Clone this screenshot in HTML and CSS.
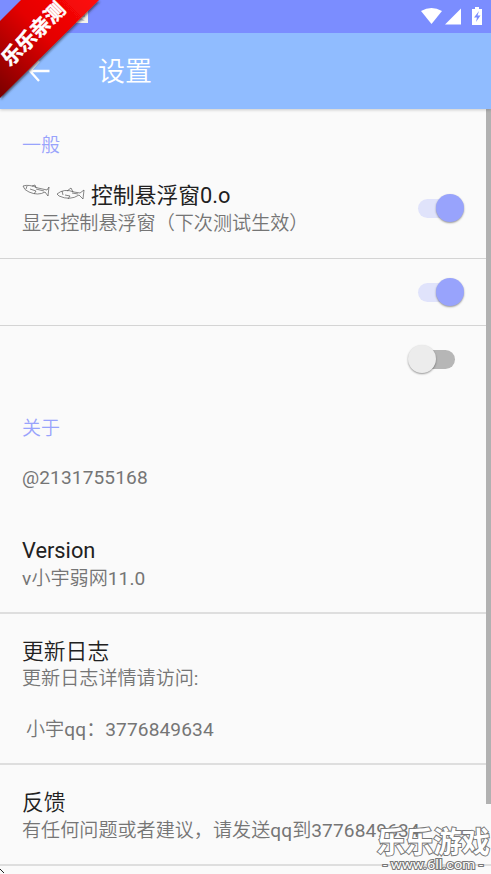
FILE: index.html
```
<!DOCTYPE html>
<html lang="zh-CN">
<head>
<meta charset="utf-8">
<title>设置</title>
<link rel="stylesheet" href="styles.css">
</head>
<body>
<div class="screen">
  <header>
    <div class="statusbar">
      <svg class="notice" width="12" height="14" viewBox="0 0 12 14"><path d="M0 0H12V14H0Z" fill="#f5f3ee"/><path d="M2 3H9V8H2ZM2 11L5 9L9 12" fill="#b9b9ca"/></svg>
      <svg class="system" width="64" height="20" viewBox="0 0 64 20" fill="#fff">
        <path d="M0 4Q10.500 -2 21 4L10.500 17Z"/>
        <path d="M40 1.500V17.500H24Z"/>
        <path d="M51 2H54V0H58V2H61V18H51Z"/>
        <path d="M58 4L53 10.500H56L55 15L59.500 8.500H56.500Z" fill="#7b8dff"/>
      </svg>
    </div>
    <div class="toolbar">
      <svg class="back" width="22" height="22" viewBox="0 0 22 22" fill="none" stroke="#fff" stroke-width="2.3"><path d="M21.500 11H3M11 1L2 11L11 21"/></svg>
      <h1>设置</h1>
    </div>
  </header>
  <main>
    <h2 class="category first">一般</h2>
    <section class="row control">
      <div class="copy">
        <div class="title"><svg class="fish" width="69" height="24" viewBox="0 0 69 24" fill="none" stroke="#555" stroke-width=".7"><path d="M1 5Q7 3 16 7L25 9L27 6L26 15L23 11Q16 15 7 11Q2 9 1 5ZM5 5L4 8M10 5L13 4L14 7M8 8L14 10L12 13M14 8L22 10"/><path d="M35 13Q42 7 52 11L58 12L62 9L61 18L57 14Q48 20 37 15ZM40 10L41 14M45 10L49 7L51 11M43 14L48 15L46 18M50 12L56 13"/></svg>控制悬浮窗0.o</div>
        <div class="summary">显示控制悬浮窗（下次测试生效）</div>
      </div>
      <div class="switch on"><i></i></div>
    </section>
    <section class="row blank"><div class="switch on"><i></i></div></section>
    <section class="row blank last"><div class="switch"><i></i></div></section>
    <h2 class="category about">关于</h2>
    <div class="row id"><div class="summary"><b>@2131755168</b></div></div>
    <section class="row version"><div class="title">Version</div><div class="summary"><b>v</b>小宇弱网<b>11.0</b></div></section>
    <section class="row log"><div class="title han">更新日志</div><div class="summary">更新日志详情请访问<b>:</b><p>小宇<b>qq</b>：<b>3776849634</b></p></div></section>
    <section class="row feedback"><div class="title han">反馈</div><div class="summary">有任何问题或者建议，请发送<b>qq</b>到<b>3776849634</b></div></section>
  </main>
  <div class="scrollbar"></div>
  <svg class="ribbon" width="104" height="104" viewBox="0 0 104 104">
    <defs>
      <linearGradient id="red" x1="0" y1="1" x2="1" y2="0"><stop stop-color="#790000"/><stop offset=".55" stop-color="#e40000"/><stop offset="1" stop-color="#ff0b0b"/></linearGradient>
      <filter id="shade"><feDropShadow dx="1" dy="1.500" stdDeviation="1" flood-color="#222" flood-opacity=".65"/></filter>
    </defs>
    <path d="M0 21L21 0H99L0 98Z" fill="url(#red)" filter="url(#shade)"/>
    <text x="32.500" y="41" text-anchor="middle" transform="rotate(-45 33 33)">乐乐亲测</text>
  </svg>
  <svg class="watermark" width="121" height="59" viewBox="0 0 121 59">
    <text class="brand" x="7" y="38" textLength="113" lengthAdjust="spacingAndGlyphs">乐乐游戏</text>
    <text class="url" x="13" y="54" textLength="100" lengthAdjust="spacingAndGlyphs">- www.6ll.com -</text>
  </svg>
  <svg class="corner" width="5" height="5" viewBox="0 0 5 5"><path d="M0 0L4 4" stroke="#222"/></svg>
</div>
</body>
</html>
```
FILE: styles.css
```
* { box-sizing: border-box; }
body { margin: 0; font-family: Roboto, "Noto Sans CJK SC", sans-serif; background: #fafafa; }
.screen { position: relative; width: 491px; height: 874px; overflow: hidden; }
header { position: relative; z-index: 2; box-shadow: 0 1px 3px #0003; }
.statusbar { height: 33px; background: #7b8dff; display: flex; justify-content: space-between; padding: 7px 6px 0 76px; }
.notice { margin-top: 2px; }
.toolbar { height: 76px; background: #90bcff; display: flex; align-items: center; padding-left: 28px; }
.back { flex: none; }
h1 { margin: 2px 0 0 48px; font-size: 27px; line-height: 36px; font-weight: 350; color: #fff; }
.category { margin: 0; padding-left: 22px; font-size: 19px; line-height: 28px; font-weight: 350; color: #98a3fc; }
.first { padding-top: 23px; height: 61px; }
.about { height: 49px; padding-top: 22px; }
.row { padding-left: 22px; border-bottom: 2px solid #dedede; }
.title { font-size: 21.8px; line-height: 28px; color: #212121; white-space: nowrap; }
.han { font-weight: 350; }
.summary { font-size: 19.1px; line-height: 26px; color: #757575; font-weight: 350; white-space: nowrap; }
.summary b { font-weight: 400; letter-spacing: .12px; }
.summary p { margin: 25px 0 0 4px; }
.control { height: 89px; padding-top: 11px; display: flex; justify-content: space-between; padding-right: 26px; border-bottom: 1px solid #d4d4d4; }
.control .summary { padding-top: 1px; }
.fish { vertical-align: -2px; }
.control .switch { margin-top: 11px; }
.blank { height: 67px; padding: 17px 26px 0 0; display: flex; justify-content: flex-end; border-bottom: 1px solid #d4d4d4; }
.last { height: 67px; border: 0; }
.switch { position: relative; width: 61px; height: 32px; flex: none; }
.switch::before { content: ""; position: absolute; left: 14px; top: 7px; width: 37px; height: 19px; border-radius: 10px; background: #b6b6b6; }
.switch i { position: absolute; left: 4px; top: 2px; width: 28px; height: 28px; border-radius: 50%; background: #ececec; box-shadow: 0 1px 2px #0006; }
.on::before { background: #e0e3fb; }
.on i { left: 32px; background: #98a3fc; }
.id { height: 71px; padding-top: 23px; border: 0; }
.version { height: 101px; padding-top: 24px; }
.version .summary { padding-top: 1px; }
.log { height: 151px; padding-top: 24px; }
.feedback { height: 101px; padding-top: 24px; }
.feedback .summary { padding-top: 1px; }
.scrollbar { position: absolute; right: 0; top: 109px; width: 5px; height: 695px; background: #b1b1b1; }
.ribbon { position: absolute; left: 0; top: 0; z-index: 3; }
.ribbon text { font-family: "Noto Sans CJK SC", sans-serif; font-size: 20px; font-weight: 700; fill: #fff; stroke: #fff; stroke-width: .5px; }
.watermark { position: absolute; left: 370px; top: 815px; }
.watermark text { fill: #fff; stroke: #777; stroke-width: 2px; paint-order: stroke; font-family: Roboto, "Noto Sans CJK SC", sans-serif; }
.watermark .brand { font-size: 29px; font-weight: 700; }
.watermark .url { font-size: 13px; }
.corner { position: absolute; left: 0; top: 869px; }
```
